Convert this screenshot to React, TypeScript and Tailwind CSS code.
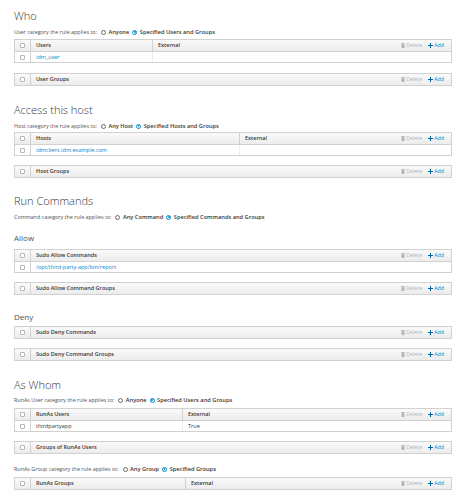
import React from "react";

type Col = { label: string; width?: string };

function Checkbox() {
  return (
    <div className="w-[16px] shrink-0 self-stretch flex items-center justify-center border-r border-[#d1d1d1]">
      <span className="block w-[5px] h-[5px] rounded-[1px] border border-[#b7b7b7] bg-white" />
    </div>
  );
}

function TrashIcon() {
  return (
    <svg width="4" height="5" viewBox="0 0 4 5" className="mr-[1px]">
      <rect x="0" y="0" width="4" height="0.8" fill="#b4b4b4" />
      <rect x="0.5" y="1.2" width="3" height="3.8" fill="#b4b4b4" />
    </svg>
  );
}

function PlusIcon() {
  return (
    <svg width="5" height="5" viewBox="0 0 5 5" className="mr-[1px]">
      <rect x="2" y="0" width="1" height="5" fill="#00659c" />
      <rect x="0" y="2" width="5" height="1" fill="#00659c" />
    </svg>
  );
}

function Actions() {
  return (
    <div className="ml-auto flex items-center pr-[7px] text-[5.3px] font-normal">
      <span className="flex items-center text-[#b4b4b4]">
        <TrashIcon />
        Delete
      </span>
      <span className="flex items-center text-[#0088ce] ml-[6px]">
        <PlusIcon />
        Add
      </span>
    </div>
  );
}

function Table({
  cols,
  rows = [],
  link = false,
}: {
  cols: Col[];
  rows?: string[][];
  link?: boolean;
}) {
  return (
    <div className="border border-[#d1d1d1]">
      <div className="flex h-[11px] bg-gradient-to-b from-[#fafafa] to-[#ececec] text-[5.5px] font-semibold text-[#363636]">
        <Checkbox />
        {cols.map((c, i) => (
          <div
            key={i}
            className={`flex items-center pl-[5px] ${
              c.width ? c.width + " shrink-0 border-r border-[#d1d1d1]" : "flex-1"
            }`}
          >
            {c.label}
            {!c.width && <Actions />}
          </div>
        ))}
      </div>
      {rows.map((r, ri) => (
        <div key={ri} className="flex h-[11px] border-t border-[#d1d1d1] bg-white text-[5.5px]">
          <Checkbox />
          {r.map((cell, ci) => (
            <div
              key={ci}
              className={`flex items-center pl-[5px] ${
                cols[ci].width ? cols[ci].width + " shrink-0 border-r border-[#ededed]" : "flex-1"
              } ${link && ci === 0 ? "text-[#0088ce]" : "text-[#363636]"}`}
            >
              {cell}
            </div>
          ))}
        </div>
      ))}
    </div>
  );
}

function Radio({ checked, label }: { checked?: boolean; label: string }) {
  return (
    <span className="inline-flex items-center ml-[3px]">
      <span
        className={`w-[5px] h-[5px] rounded-full border flex items-center justify-center mr-[2.5px] ${
          checked ? "border-[#0088ce]" : "border-[#6b6b6b]"
        }`}
      >
        {checked && <span className="block w-[1.5px] h-[1.5px] rounded-full bg-[#0088ce]" />}
      </span>
      <span className="font-semibold text-[5.7px] text-[#363636]">{label}</span>
    </span>
  );
}

function Category({ text, a, b, mt }: { text: string; a: string; b: string; mt: string }) {
  return (
    <div className={`${mt} h-[8px] flex items-center text-[5.4px] text-[#4d5258]`}>
      <span className="mr-[1px]">{text}</span>
      <Radio label={a} />
      <Radio checked label={b} />
    </div>
  );
}

function Heading({ children, mt }: { children: React.ReactNode; mt: string }) {
  return (
    <h1 className={`${mt} h-[12px] leading-[12px] text-[11px] font-light text-[#363636]`}>
      {children}
    </h1>
  );
}

function SubHeading({ children, mt }: { children: React.ReactNode; mt: string }) {
  return (
    <h2 className={`${mt} h-[12px] leading-[12px] text-[8px] font-normal text-[#4d5258]`}>
      {children}
    </h2>
  );
}

export default function App() {
  return (
    <div className="w-[474px] h-[502px] overflow-hidden bg-white pl-[14px] pr-[22px] pt-[10px] font-['Open_Sans',sans-serif]">
      <Heading mt="mt-0">Who</Heading>
      <Category mt="mt-[6px]" text="User category the rule applies to:" a="Anyone" b="Specified Users and Groups" />
      <div className="mt-[3px]">
        <Table cols={[{ label: "Users", width: "w-[122px]" }, { label: "External" }]} rows={[["idm_user", ""]]} link />
      </div>
      <div className="mt-[10px]">
        <Table cols={[{ label: "User Groups" }]} />
      </div>

      <Heading mt="mt-[18px]">Access this host</Heading>
      <Category mt="mt-[6px]" text="Host category the rule applies to:" a="Any Host" b="Specified Hosts and Groups" />
      <div className="mt-[2px]">
        <Table
          cols={[{ label: "Hosts", width: "w-[209px]" }, { label: "External" }]}
          rows={[["idmclient.idm.example.com", ""]]}
          link
        />
      </div>
      <div className="mt-[9px]">
        <Table cols={[{ label: "Host Groups" }]} />
      </div>

      <Heading mt="mt-[17px]">Run Commands</Heading>
      <Category
        mt="mt-[6px]"
        text="Command category the rule applies to:"
        a="Any Command"
        b="Specified Commands and Groups"
      />
      <SubHeading mt="mt-[11px]">Allow</SubHeading>
      <div className="mt-[5px]">
        <Table
          cols={[{ label: "Sudo Allow Commands" }]}
          rows={[["/opt/third-party-app/bin/report"]]}
          link
        />
      </div>
      <div className="mt-[9px]">
        <Table cols={[{ label: "Sudo Allow Command Groups" }]} />
      </div>

      <SubHeading mt="mt-[16px]">Deny</SubHeading>
      <div className="mt-[3px]">
        <Table cols={[{ label: "Sudo Deny Commands" }]} />
      </div>
      <div className="mt-[9px]">
        <Table cols={[{ label: "Sudo Deny Command Groups" }]} />
      </div>

      <Heading mt="mt-[18px]">As Whom</Heading>
      <Category
        mt="mt-[5px]"
        text="RunAs User category the rule applies to:"
        a="Anyone"
        b="Specified Users and Groups"
      />
      <div className="mt-[4px]">
        <Table
          cols={[{ label: "RunAs Users", width: "w-[152px]" }, { label: "External" }]}
          rows={[["thirdpartyapp", "True"]]}
        />
      </div>
      <div className="mt-[9px]">
        <Table cols={[{ label: "Groups of RunAs Users" }]} />
      </div>
      <Category
        mt="mt-[11px]"
        text="RunAs Group category the rule applies to:"
        a="Any Group"
        b="Specified Groups"
      />
      <div className="mt-[4px]">
        <Table cols={[{ label: "RunAs Groups", width: "w-[155px]" }, { label: "External" }]} />
      </div>
    </div>
  );
}
